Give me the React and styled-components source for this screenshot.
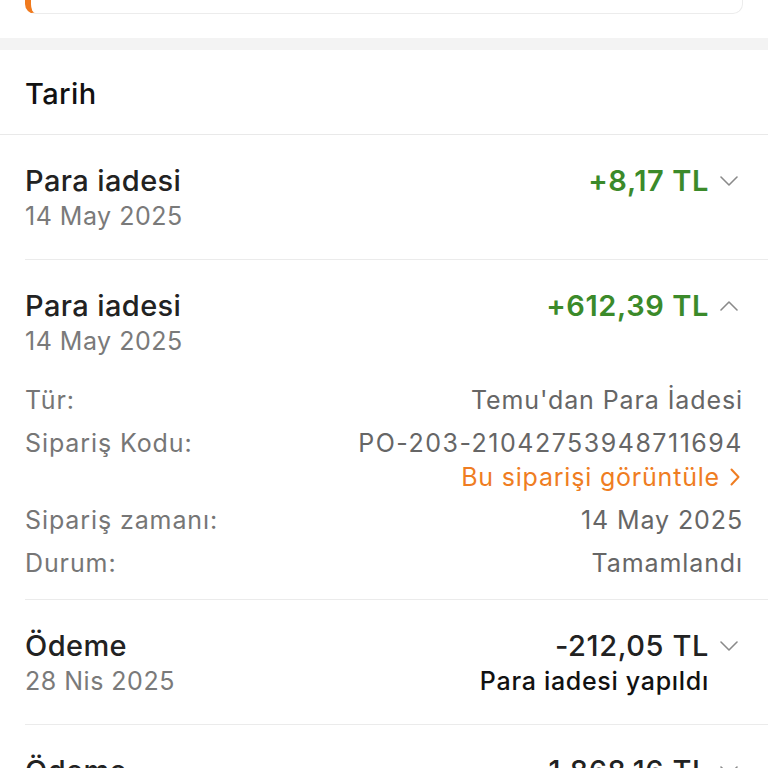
import React from 'react'
import styled, { createGlobalStyle } from 'styled-components'

const GlobalStyle = createGlobalStyle`
  html, body {
    margin: 0;
    padding: 0;
    background: #fff;
  }
  body {
    font-family: Inter, "Noto Sans", "Liberation Sans", sans-serif;
    -webkit-font-smoothing: antialiased;
  }
`

const Page = styled.div`
  width: 768px;
  height: 768px;
  overflow: hidden;
  background: #fff;
`

const CardWrap = styled.div`
  padding: 0 25px 24px;
`

const Card = styled.div`
  height: 13px;
  border: 1px solid #ececec;
  border-top: none;
  border-left: 6px solid #f07a1e;
  border-radius: 0 0 10px 10px;
`

const Band = styled.div`
  height: 12px;
  background: #f3f3f3;
`

const SectionHead = styled.div`
  height: 85px;
  display: flex;
  align-items: center;
  padding: 2px 25px 0;
  box-sizing: border-box;
  font-size: 29px;
  font-weight: 500;
  color: #111;
  border-bottom: 1px solid #e9e9e9;
  letter-spacing: 0.4px;
`

const Item = styled.div`
  margin-left: 25px;
  padding: 29px 25px ${p => (p.$open ? '19px' : '28px')} 0;
  border-bottom: 1px solid #ebebeb;
`

const Top = styled.div`
  display: flex;
  justify-content: space-between;
  align-items: flex-start;
`

const Left = styled.div`
  display: flex;
  flex-direction: column;
`

const Right = styled.div`
  display: flex;
  flex-direction: column;
  align-items: flex-end;
`

const Title = styled.div`
  font-size: 29px;
  line-height: 34px;
  font-weight: 500;
  color: #222;
  letter-spacing: 0.4px;
`

const Date = styled.div`
  margin-top: 3px;
  font-size: 25px;
  line-height: 30px;
  color: #7a7a7a;
  letter-spacing: 0.5px;
`

const AmountRow = styled.div`
  display: flex;
  align-items: center;
  gap: 11px;
  margin-right: 5px;
`

const Amount = styled.div`
  font-size: 29px;
  line-height: 34px;
  font-weight: ${p => (p.$positive ? 600 : 500)};
  color: ${p => (p.$positive ? '#3b8a2a' : '#222')};
  letter-spacing: 0.6px;
`

const Note = styled.div`
  margin: 3px 34px 0 0;
  font-size: 25px;
  line-height: 30px;
  font-weight: 500;
  color: #111;
  letter-spacing: 0.7px;
`

const Details = styled.div`
  display: flex;
  flex-direction: column;
  gap: 9px;
  margin-top: 27px;
`

const DetailRow = styled.div`
  display: flex;
  justify-content: space-between;
  align-items: flex-start;
  font-size: 25px;
  line-height: 34px;
  letter-spacing: 0.9px;
`

const Label = styled.div`
  color: #767676;
`

const Values = styled.div`
  display: flex;
  flex-direction: column;
  align-items: flex-end;
  color: #666;
`

const Code = styled.div`
  letter-spacing: ${p => (p.$wide ? '1.5px' : 'inherit')};
`

const Link = styled.div`
  display: flex;
  align-items: center;
  gap: 10px;
  margin-right: 3px;
  color: #ef7d22;
  letter-spacing: 0.8px;
`

const Chevron = ({ up }) => (
  <svg width="18" height="10" viewBox="0 0 18 10" fill="none">
    <path
      d={up ? 'M1 9 L9 1 L17 9' : 'M1 1 L9 9 L17 1'}
      stroke="#8a8a8a"
      strokeWidth="1.6"
      strokeLinecap="round"
      strokeLinejoin="round"
    />
  </svg>
)

const ArrowRight = () => (
  <svg width="10" height="18" viewBox="0 0 10 18" fill="none">
    <path d="M1.5 1.5 L8.5 9 L1.5 16.5" stroke="#ef7d22" strokeWidth="2" strokeLinecap="round" strokeLinejoin="round" />
  </svg>
)

const transactions = [
  { title: 'Para iadesi', date: '14 May 2025', amount: '+8,17 TL', positive: true },
  {
    title: 'Para iadesi',
    date: '14 May 2025',
    amount: '+612,39 TL',
    positive: true,
    open: true,
    details: [
      { label: 'Tür:', value: "Temu'dan Para İadesi" },
      { label: 'Sipariş Kodu:', value: 'PO-203-21042753948711694', code: true, link: 'Bu siparişi görüntüle' },
      { label: 'Sipariş zamanı:', value: '14 May 2025' },
      { label: 'Durum:', value: 'Tamamlandı' },
    ],
  },
  { title: 'Ödeme', date: '28 Nis 2025', amount: '-212,05 TL', note: 'Para iadesi yapıldı' },
  { title: 'Ödeme', date: '25 Nis 2025', amount: '-1.868,16 TL' },
]

export default function App() {
  return (
    <Page>
      <GlobalStyle />
      <CardWrap>
        <Card />
      </CardWrap>
      <Band />
      <SectionHead>Tarih</SectionHead>
      {transactions.map((t, i) => (
        <Item key={i} $open={t.open}>
          <Top>
            <Left>
              <Title>{t.title}</Title>
              <Date>{t.date}</Date>
            </Left>
            <Right>
              <AmountRow>
                <Amount $positive={t.positive}>{t.amount}</Amount>
                <Chevron up={t.open} />
              </AmountRow>
              {t.note && <Note>{t.note}</Note>}
            </Right>
          </Top>
          {t.details && (
            <Details>
              {t.details.map((d, j) => (
                <DetailRow key={j}>
                  <Label>{d.label}</Label>
                  <Values>
                    <Code $wide={d.code}>{d.value}</Code>
                    {d.link && (
                      <Link>
                        {d.link}
                        <ArrowRight />
                      </Link>
                    )}
                  </Values>
                </DetailRow>
              ))}
            </Details>
          )}
        </Item>
      ))}
    </Page>
  )
}
